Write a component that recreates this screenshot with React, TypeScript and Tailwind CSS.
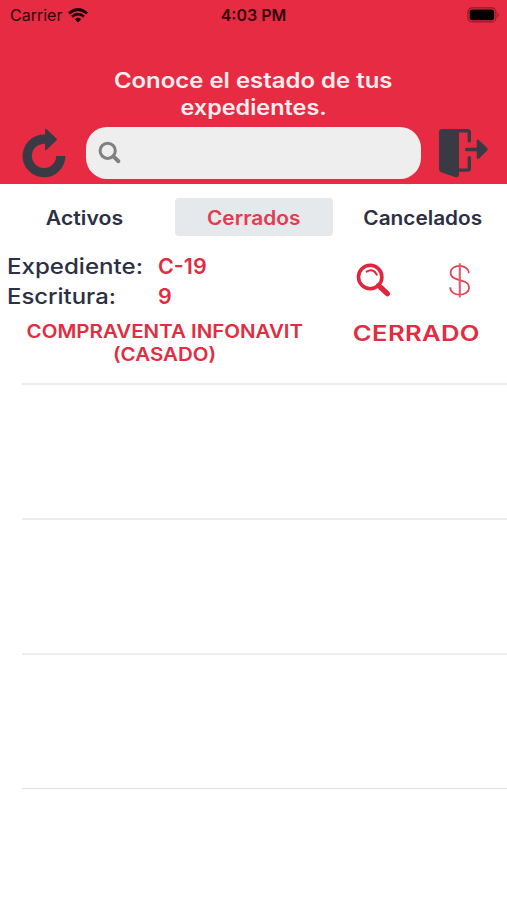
import React from "react";

function StatusBar() {
  return (
    <div className="grid h-[30px] grid-cols-3 items-center text-[16px] leading-[30px] text-[#30070c]">
      <div className="flex items-center gap-[6px] pl-[10px]">
        <span className="tracking-[0px]">Carrier</span>
        <svg width="20" height="15" viewBox="0 0 20 15" fill="none" stroke="#1c0407" strokeWidth="2.7">
          <path d="M1 5.4 Q10 -2.4 19 5.4" />
          <path d="M4 8.7 Q10 3.4 16 8.7" />
          <path d="M6.8 11.2 Q10 8.4 13.2 11.2 L10 14.4 Z" fill="#1c0407" stroke="none" />
        </svg>
      </div>
      <span className="text-center font-semibold">4:03 PM</span>
      <div className="flex justify-end pr-[7px]">
        <svg width="33" height="16" viewBox="0 0 33 16">
          <rect x="0.9" y="0.9" width="28" height="14" rx="4.2" fill="none" stroke="#921a29" strokeWidth="1.2" />
          <rect x="2.6" y="2.6" width="24.6" height="10.6" rx="2.6" fill="#000" />
          <path d="M30.6 5.4 Q33 8 30.6 10.6Z" fill="#921a29" />
        </svg>
      </div>
    </div>
  );
}

function Header() {
  return (
    <header className="h-[184px] bg-[#e62b42]">
      <StatusBar />
      <h1 className="mt-[37px] flex flex-col items-center text-[21px] leading-[27px] font-semibold text-[#ffeef0]">
        <span className="scale-x-[1.14]">Conoce el estado de tus</span>
        <span className="scale-x-[1.115]">expedientes.</span>
      </h1>
      <div className="mt-[6px] flex h-[52px] items-start">
        <svg className="ml-[22px] shrink-0" width="44" height="52" viewBox="0 0 44 52">
          <path d="M24.5 12.3 A16.8 16.8 0 1 0 38.8 29" fill="none" stroke="#3a3a45" strokeWidth="9.2" />
          <path d="M23.8 2.5 L34.2 12.4 L23.8 22.4 Z" fill="#3a3a45" stroke="#3a3a45" strokeWidth="1.5" strokeLinejoin="round" />
        </svg>
        <div className="ml-[20px] flex h-[52px] w-[335px] items-center rounded-[21px] bg-[#eeeeee] pl-[12px]">
          <svg width="24" height="24" viewBox="0 0 24 24" fill="none" stroke="#808080">
            <circle cx="9.7" cy="9.8" r="7.6" strokeWidth="3" />
            <path d="M15.4 15.4 L20.4 20.2" strokeWidth="4" strokeLinecap="round" />
          </svg>
        </div>
        <svg className="ml-[17px] shrink-0" width="51" height="52" viewBox="0 0 51 52">
          <path d="M4 2 H29 Q33 2 33 6 V14 Q33 15.5 31.3 15.5 Q29.6 15.5 29.6 14 V5.5 H21 V41.5 H29.6 V31 Q29.6 29 31.3 29 Q33 29 33 31 V42 Q33 44.8 29 44.8 H21 V47 Q21 51 17 50 L3 45.2 Q1 44.5 1 42 V5 Q1 2 4 2Z" fill="#3a3a45" />
          <path d="M28.5 20.7 H38.8 V14 Q39 11.6 41 13.2 L49.2 21 Q50.2 22.3 49.2 23.6 L41 31.4 Q39 33 38.8 30.5 V24.2 H28.5 Q27 24.2 27 22.4 Q27 20.7 28.5 20.7Z" fill="#3a3a45" />
        </svg>
      </div>
    </header>
  );
}

function Tabs() {
  return (
    <nav className="mt-[14px] flex h-[38px] text-[19.5px] leading-[38px] font-semibold text-[#2d2f43]">
      <button className="w-[175px] pt-px pr-[6px]">
        <span className="inline-block scale-x-[1.09]">Activos</span>
      </button>
      <button className="w-[158px] rounded-[4px] bg-[#e5e9ec] pt-px text-[#e33c50]">
        <span className="inline-block scale-x-[1.07]">Cerrados</span>
      </button>
      <button className="w-[174px] pt-px pl-[5px]">
        <span className="inline-block scale-x-[1.066]">Cancelados</span>
      </button>
    </nav>
  );
}

function CaseRow() {
  return (
    <section className="flex h-[148px] pt-[15px] text-[#e12d42]">
      <div className="w-[330px] shrink-0">
        <dl className="grid grid-cols-[151px_1fr] pl-[7px] text-[21.5px] leading-[30px]">
          <dt className="origin-left scale-x-[1.12] font-medium text-[#2d2f43]">Expediente:</dt>
          <dd className="font-semibold">C-19</dd>
          <dt className="origin-left scale-x-[1.11] font-medium text-[#2d2f43]">Escritura:</dt>
          <dd className="font-semibold">9</dd>
        </dl>
        <p className="mt-[9px] flex flex-col items-center text-[18.5px] leading-[22.5px] font-semibold">
          <span className="scale-x-[1.108]">COMPRAVENTA INFONAVIT</span>
          <span className="scale-x-[1.108]">(CASADO)</span>
        </p>
      </div>
      <div className="flex w-[172px] flex-col items-center">
        <div className="mt-[11px] flex h-[38px] w-full justify-between pr-[31px] pl-[26px]">
          <svg width="36" height="36" viewBox="0 0 36 36" fill="none" stroke="#e0263c" strokeLinecap="round">
            <circle cx="14.2" cy="15" r="11.7" strokeWidth="3.6" />
            <path d="M10.6 9.6 Q17.3 5.8 20.7 12.6" strokeWidth="2.1" />
            <path d="M24.5 25.2 L31.3 31.6" strokeWidth="5.4" />
            <path d="M22 22.8 L26 26.6" strokeWidth="3.6" />
          </svg>
          <svg width="23" height="36" viewBox="0 0 23 36" fill="none" stroke="#e44052">
            <path d="M20.8 11.2 C20.6 1.6 2.6 1.6 2.6 10.8 C2.6 20.6 21 15.6 21 25.4 C21 35.2 2.2 35.2 2.2 25.2" strokeWidth="1.7" />
            <path d="M11.8 1.3 V35.4" strokeWidth="2.1" stroke="#e65b69" />
          </svg>
        </div>
        <span className="mt-[18px] scale-x-[1.19] text-[21.5px] leading-[30px] font-semibold tracking-[0.3px]">CERRADO</span>
      </div>
    </section>
  );
}

export default function App() {
  return (
    <main className="h-[900px] w-[507px] overflow-hidden bg-white font-['Inter','Liberation_Sans',sans-serif]">
      <Header />
      <Tabs />
      <CaseRow />
      <div className="ml-[22px]">
        <div className="-mt-px h-[135px] border-t-2 border-[#ececec]" />
        <div className="h-[135px] border-t-2 border-[#ececec]" />
        <div className="h-[135px] border-t-2 border-[#ececec]" />
        <div className="h-[112px] border-t border-[#e0e0e0]" />
      </div>
    </main>
  );
}
